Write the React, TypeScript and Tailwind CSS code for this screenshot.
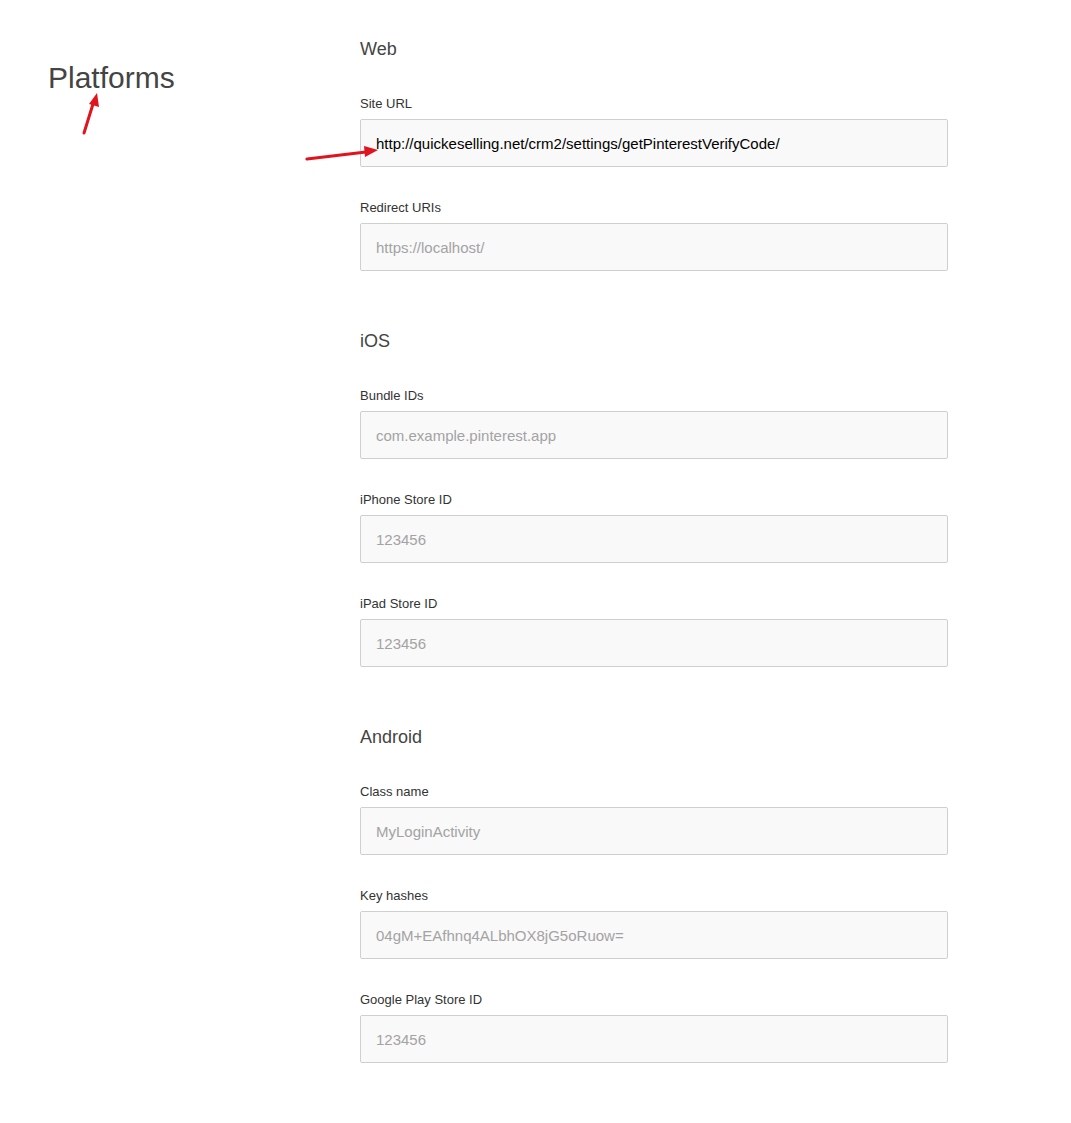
type Field = { label: string; placeholder: string; value?: string };
type Section = { title: string; fields: Field[] };

const sections: Section[] = [
  {
    title: 'Web',
    fields: [
      {
        label: 'Site URL',
        placeholder: 'https://example.com/',
        value: 'http://quickeselling.net/crm2/settings/getPinterestVerifyCode/',
      },
      { label: 'Redirect URIs', placeholder: 'https://localhost/' },
    ],
  },
  {
    title: 'iOS',
    fields: [
      { label: 'Bundle IDs', placeholder: 'com.example.pinterest.app' },
      { label: 'iPhone Store ID', placeholder: '123456' },
      { label: 'iPad Store ID', placeholder: '123456' },
    ],
  },
  {
    title: 'Android',
    fields: [
      { label: 'Class name', placeholder: 'MyLoginActivity' },
      { label: 'Key hashes', placeholder: '04gM+EAfhnq4ALbhOX8jG5oRuow=' },
      { label: 'Google Play Store ID', placeholder: '123456' },
    ],
  },
];

function TextField({ label, placeholder, value }: Field) {
  return (
    <label className="flex flex-col gap-[7px]">
      <span className="pt-px text-[13px] leading-4 text-[#333]">{label}</span>
      <input
        readOnly
        defaultValue={value}
        placeholder={placeholder}
        className="h-12 w-full rounded-[2px] border border-[#cfcfcf] bg-[#f9f9f9] pl-[15px] pr-4 text-[15px] text-black outline-none placeholder:text-[#a3a3a3]"
      />
    </label>
  );
}

// red marker arrows drawn over the page
function Arrows() {
  return (
    <svg
      className="pointer-events-none absolute left-0 top-0"
      width="1071"
      height="1123"
      viewBox="0 0 1071 1123"
    >
      <line x1="84" y1="133" x2="93" y2="104" stroke="#e0141e" strokeWidth="3" strokeLinecap="round" />
      <polygon points="97,93 99,107 89,104" fill="#e0141e" />
      <line x1="307" y1="159" x2="366" y2="152" stroke="#e0141e" strokeWidth="3.2" strokeLinecap="round" />
      <polygon points="378,150 365,157 364,146" fill="#e0141e" />
    </svg>
  );
}

export default function App() {
  return (
    <div
      className="relative min-h-[1123px] bg-white"
      style={{ fontFamily: '"Liberation Sans", Arial, sans-serif' }}
    >
      <div className="flex pt-9">
        <div className="w-[360px] pl-12 pt-6">
          <h1 className="text-[30px] leading-9 text-[#444]">Platforms</h1>
        </div>
        <div className="flex w-[588px] flex-col gap-[57px]">
          {sections.map((s) => (
            <section key={s.title} className="flex flex-col gap-[34px]">
              <h2 className="pt-px text-[18px] leading-6 text-[#444]">{s.title}</h2>
              <div className="flex flex-col gap-8">
                {s.fields.map((f) => (
                  <TextField key={f.label} {...f} />
                ))}
              </div>
            </section>
          ))}
        </div>
      </div>
      <Arrows />
    </div>
  );
}
